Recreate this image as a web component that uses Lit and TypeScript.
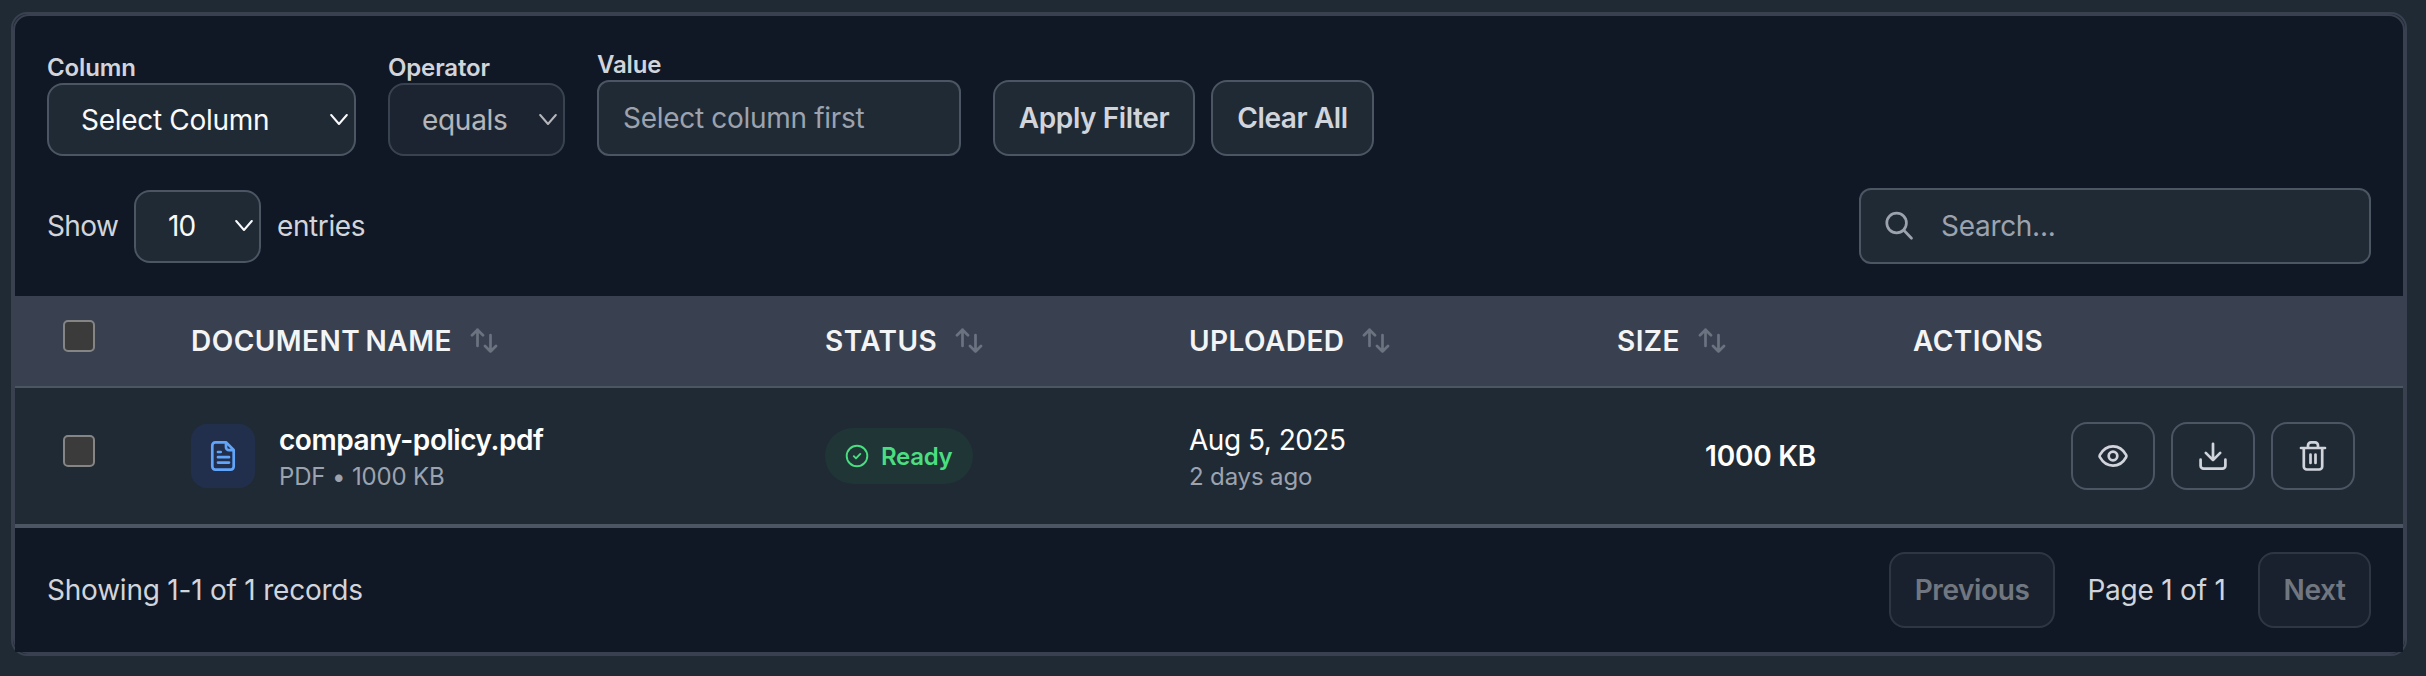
import { LitElement, html, css, svg } from "lit";
import { customElement } from "lit/decorators.js";

const icons = {
  chevron: svg`<svg class="chev" width="18" height="12" viewBox="0 0 18 12"><path d="M1.2 1L9 10l7.8-9"/></svg>`,
  search: svg`<svg width="32" height="32" viewBox="0 0 32 32"><circle cx="11.6" cy="13" r="9.8"/><path d="M18.800 20.300l7.700 7.900"/></svg>`,
  sort: svg`<svg width="28" height="26" viewBox="0 0 28 26"><path d="M7.500 18V1.700M2 7.200l5.500-5.500 5.500 5.500M20.500 7v16.500M15 18l5.500 5.500 5.500-5.500"/></svg>`,
  file: svg`<svg width="32" height="32" viewBox="0 0 32 32"><path d="M19.200 2.400H8.300a3 3 0 0 0-3 3v21.200a3 3 0 0 0 3 3h15.400a3 3 0 0 0 3-3V9.900zM19 2.400v4.800a3 3 0 0 0 3 3h4.700M11 12h2.700M11 17.200h11M11 22.600h11"/></svg>`,
  check: svg`<svg width="24" height="24" viewBox="0 0 24 24"><circle cx="12" cy="12" r="10.300"/><path d="M8.800 12.200l2.200 2.200 4.300-4.500"/></svg>`,
  eye: svg`<svg width="32" height="32" viewBox="0 0 32 32"><path d="M2.900 17.200a2.400 2.400 0 0 1 0-2.400C5.800 9.700 10.500 6.300 16 6.300s10.200 3.400 13.100 8.500a2.400 2.400 0 0 1 0 2.400C26.200 22.300 21.500 25.700 16 25.700S5.800 22.300 2.900 17.200z"/><circle cx="16" cy="16" r="4.300"/></svg>`,
  download: svg`<svg width="32" height="32" viewBox="0 0 32 32"><path d="M16 3.800v16.200M8.800 12.900L16 20.100l7.200-7.200M3.600 19.700v6a3 3 0 0 0 3 3h18.800a3 3 0 0 0 3-3v-6"/></svg>`,
  trash: svg`<svg width="32" height="32" viewBox="0 0 32 32"><path d="M4 8h24M11 8V5.400a3 3 0 0 1 3-3h4a3 3 0 0 1 3 3V8M6.800 8v18.500a3 3 0 0 0 3 3h12.400a3 3 0 0 0 3-3V8M13.500 14.500v8.500M18.500 14.500v8.500"/></svg>`,
};

@customElement("app-root")
export class AppRoot extends LitElement {
  static styles = css`
    :host { display: block; height: 676px; padding: 12px 19px 20px 11px; background: #202a35; color: #d1d5db; font: 440 28px/40px Inter, sans-serif; letter-spacing: -0.3px; overflow: hidden; }
    :host, * { box-sizing: border-box; }
    svg { fill: none; stroke: currentColor; stroke-width: 2.7; stroke-linecap: round; stroke-linejoin: round; display: block; flex: none; }
    .chev { stroke-width: 2; }
    .card { height: 644px; border: 2px solid #394150; border-radius: 16px; }
    .inner { height: 640px; border: 2px solid #394150; border-radius: 16px; background: #111825; display: flex; flex-direction: column; }
    .top { height: 280px; padding: 32px; flex: none; display: flex; flex-direction: column; justify-content: space-between; }
    .filters, .tools { display: flex; align-items: flex-end; }
    .filters { height: 108px; }
    .field { display: flex; flex-direction: column; margin-right: 32px; }
    .label { font-size: 24px; font-weight: 570; line-height: 30px; letter-spacing: -0.15px; }
    .box, .btn { border: 2px solid #4b5563; border-radius: 16px; background: #202a35; display: flex; align-items: center; white-space: nowrap; }
    .select { height: 73px; padding: 0 6px 0 32px; color: #f9fafb; justify-content: space-between; }
    .input { height: 76px; border-radius: 12px; color: #9ca3af; padding: 0 24px; }
    .column { width: 309px; } .operator { width: 177px; opacity: .7; } .value { width: 364px; }
    .btn { height: 76px; justify-content: center; font-weight: 570; letter-spacing: -0.4px; }
    .apply { width: 202px; margin-right: 16px; } .clear { width: 163px; }
    .tools { height: 76px; align-items: center; }
    .show { width: 71px; letter-spacing: -0.6px; }
    .entries { letter-spacing: -0.4px; }
    .size { width: 127px; margin: 0 16px; letter-spacing: -0.8px; }
    .search { width: 512px; margin-left: auto; gap: 24px; }
    .row { display: grid; grid-template-columns: 176px 634px 364px 428px 296px 1fr; align-items: center; flex: none; }
    .head { height: 92px; background: #394150; border-bottom: 2px solid #4b5563; color: #f3f4f6; font-weight: 640; letter-spacing: .45px; word-spacing: -2px; }
    .th { display: flex; align-items: center; gap: 18px; }
    .th svg { color: #6b7280; }
    .body { height: 140px; background: #202a35; border-bottom: 4px solid #4b5563; color: #fff; }
    .check { width: 32px; height: 32px; border: 2px solid #858585; border-radius: 5px; background: #3b3b3b; margin: 0 0 10px 48px; }
    .doc { display: flex; align-items: center; gap: 24px; }
    .tile { width: 64px; height: 64px; border-radius: 16px; background: #222f4c; color: #60a5fa; display: grid; place-items: center; }
    .name, .date { line-height: 37px; padding-top: 4px; }
    .name { font-weight: 570; letter-spacing: -0.45px; }
    .date { letter-spacing: -0.5px; }
    .sub { font-size: 24px; line-height: 36px; color: #9ca3af; letter-spacing: -0.15px; }
    .badge { width: 148px; height: 56px; border-radius: 28px; background: #1f3536; color: #4ade80; font-size: 24px; font-weight: 570; display: flex; align-items: center; gap: 12px; padding-left: 20px; }
    .badge svg { stroke-width: 1.9; }
    .badge span { padding-top: 2px; }
    .amount { font-weight: 590; padding-left: 88px; letter-spacing: -0.2px; }
    .actions { display: flex; justify-content: flex-end; gap: 16px; padding-right: 48px; color: #d1d5db; }
    .act { width: 84px; height: 68px; border: 2px solid #4b5563; border-radius: 16px; display: grid; place-items: center; }
    .foot { flex: 1; display: flex; align-items: center; padding: 0 32px; background: #111825; letter-spacing: -0.22px; }
    .pager { margin-left: auto; display: flex; align-items: center; }
    .page { width: 203px; text-align: center; }
    .off { opacity: .5; } .prev { width: 166px; } .next { width: 113px; }
  `;

  render() {
    const th = (t: string) => html`<div class="th"><span>${t}</span>${icons.sort}</div>`;
    return html`<div class="card"><div class="inner">
      <div class="top">
        <div class="filters">
          <div class="field"><span class="label">Column</span><div class="box select column"><span>Select Column</span>${icons.chevron}</div></div>
          <div class="field"><span class="label">Operator</span><div class="box select operator"><span>equals</span>${icons.chevron}</div></div>
          <div class="field"><span class="label">Value</span><div class="box input value">Select column first</div></div>
          <div class="btn apply">Apply Filter</div><div class="btn clear">Clear All</div>
        </div>
        <div class="tools"><span class="show">Show</span><div class="box select size"><span>10</span>${icons.chevron}</div><span class="entries">entries</span>
          <div class="box input search">${icons.search}<span>Search...</span></div></div>
      </div>
      <div class="row head"><div class="check"></div>${th("DOCUMENT NAME")}${th("STATUS")}${th("UPLOADED")}${th("SIZE")}<div class="th">ACTIONS</div></div>
      <div class="row body"><div class="check"></div>
        <div class="doc"><div class="tile">${icons.file}</div><div><div class="name">company-policy.pdf</div><div class="sub">PDF • 1000 KB</div></div></div>
        <div class="badge">${icons.check}<span>Ready</span></div>
        <div><div class="date">Aug 5, 2025</div><div class="sub">2 days ago</div></div>
        <div class="amount">1000 KB</div>
        <div class="actions"><div class="act">${icons.eye}</div><div class="act">${icons.download}</div><div class="act">${icons.trash}</div></div>
      </div>
      <div class="foot"><span>Showing 1-1 of 1 records</span><div class="pager"><div class="btn prev off">Previous</div><span class="page">Page 1 of 1</span><div class="btn next off">Next</div></div></div>
    </div></div>`;
  }
}
